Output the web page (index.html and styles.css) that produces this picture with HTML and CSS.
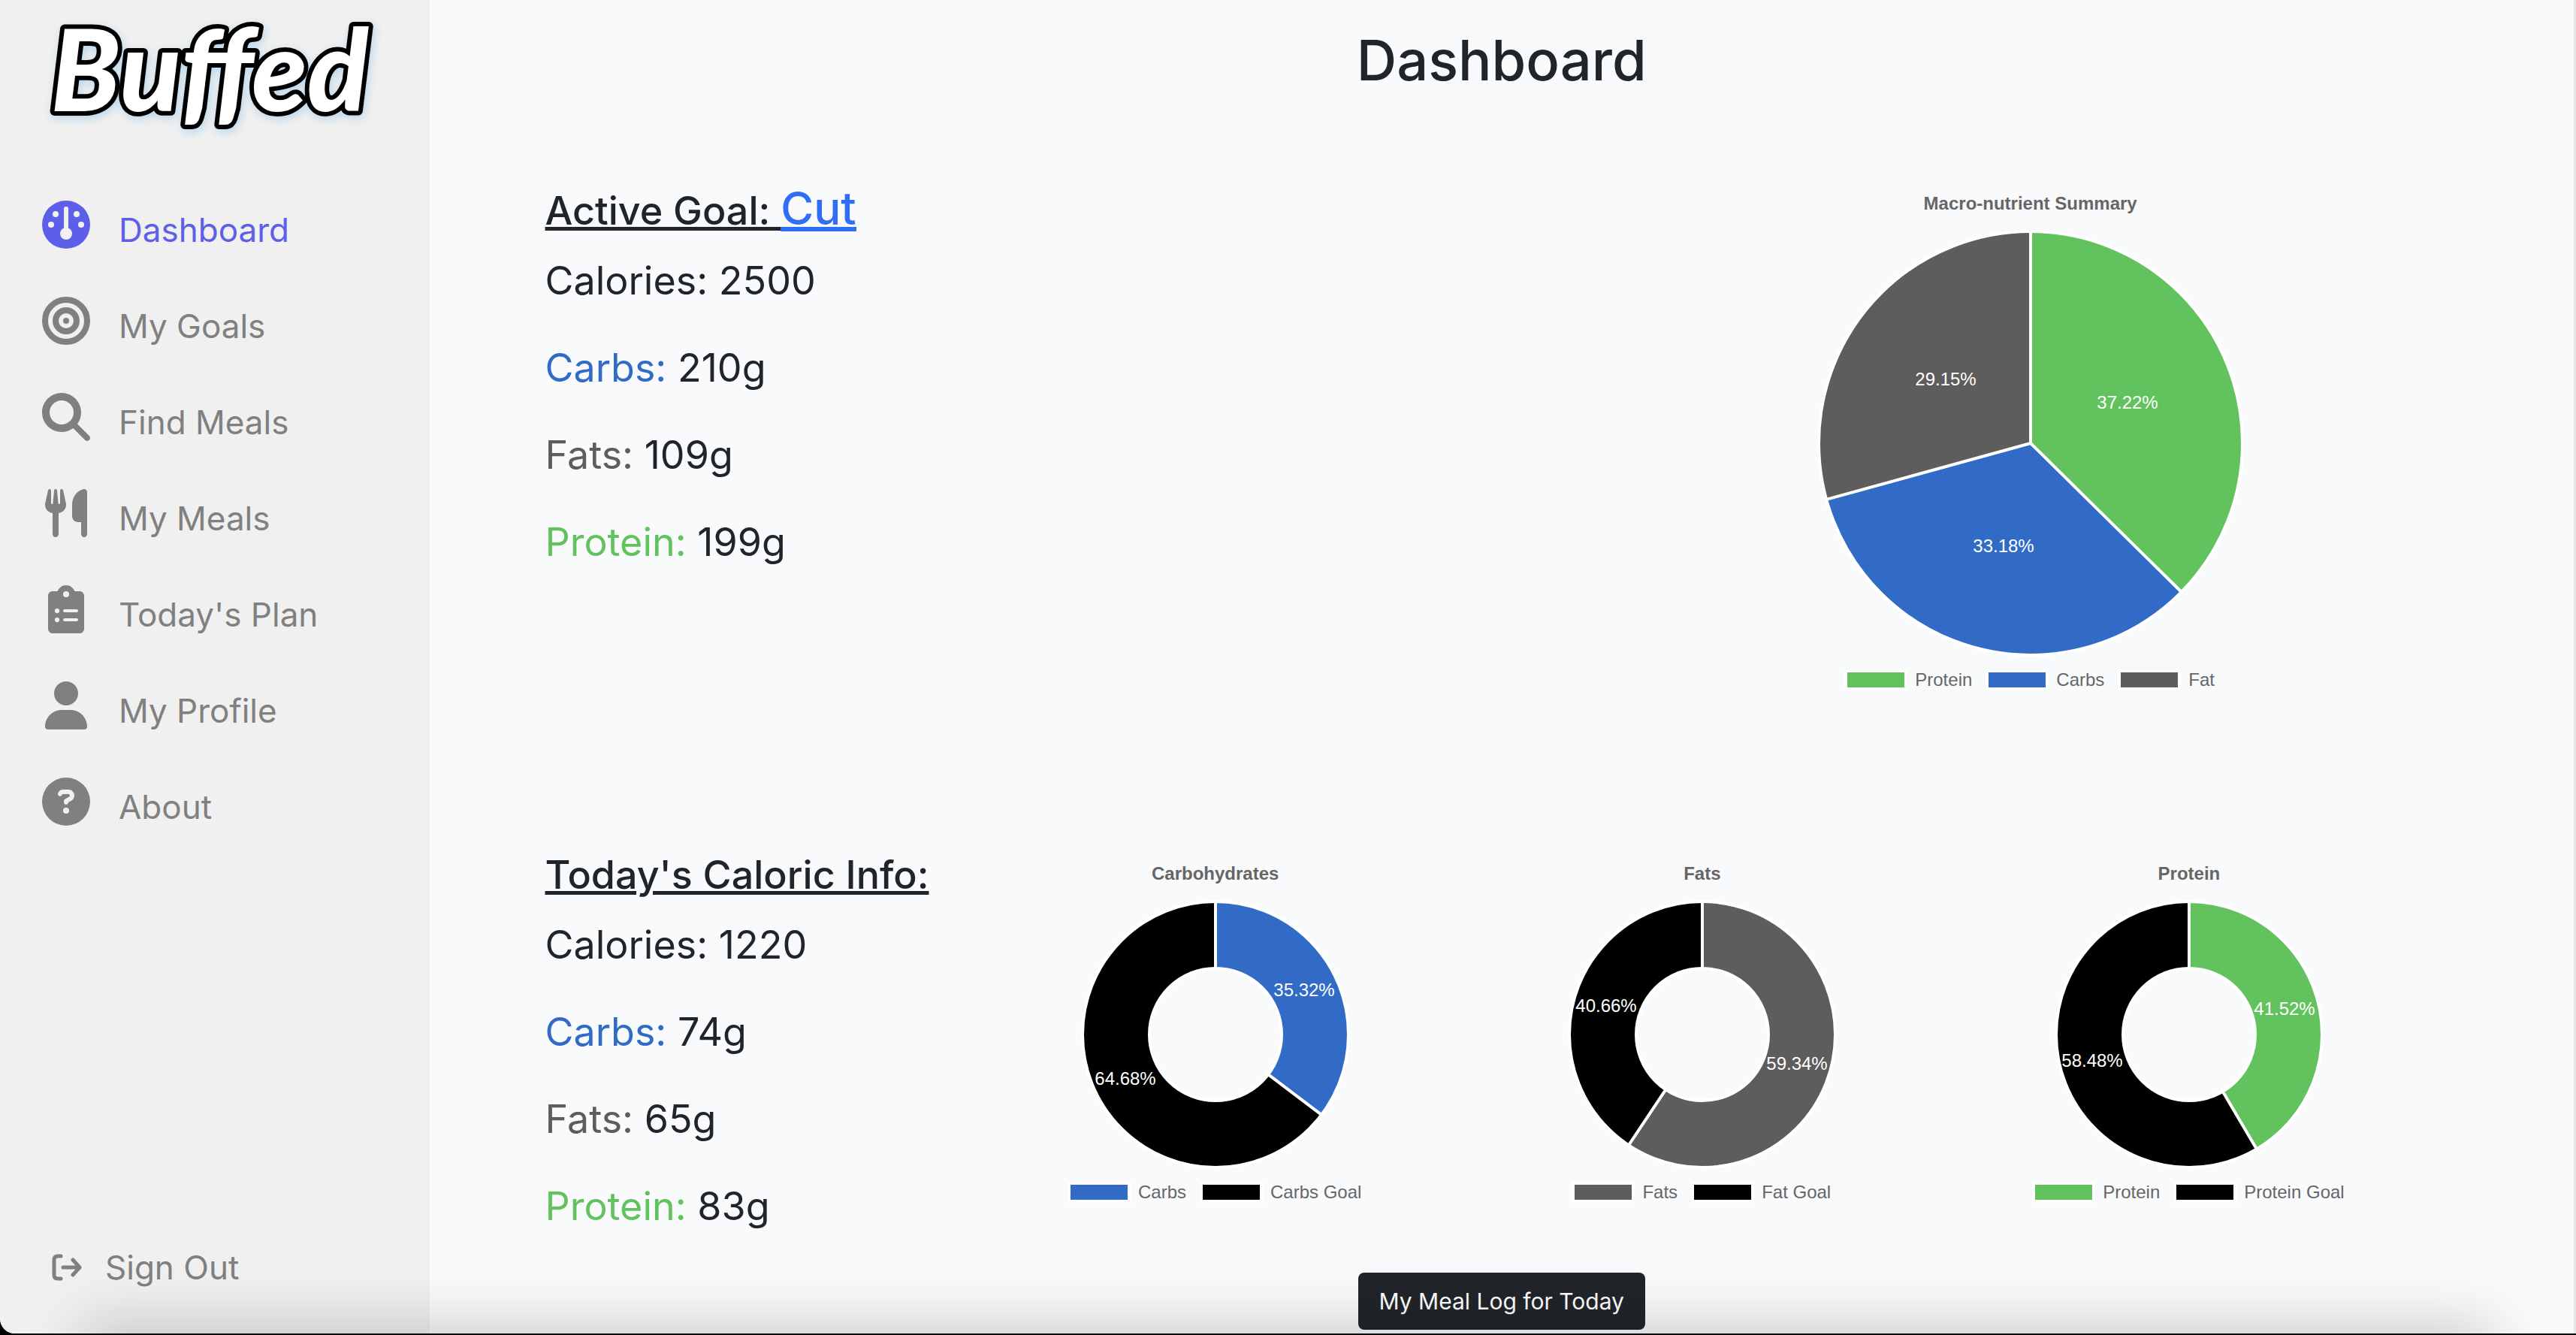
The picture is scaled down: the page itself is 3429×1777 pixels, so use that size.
FILE: index.html
```html
<!DOCTYPE html>
<html lang="en">
<head>
<meta charset="utf-8">
<title>Buffed - Dashboard</title>
<meta name="viewport" content="width=device-width, initial-scale=1">
<link rel="stylesheet" href="styles.css">
</head>
<body>
<div class="app">
  <aside class="sidebar">
    <a class="logo" href="#" aria-label="Buffed home">
      <svg class="logo-art" viewBox="0 0 460 210"><text class="logo-text" x="223" y="148" text-anchor="middle">Buffed</text></svg>
    </a>
    <nav class="nav">
      <a class="nav-link active" href="#">
        <svg class="nav-icon" viewBox="0 0 512 512"><circle cx="256" cy="256" r="256"/><g fill="#f0f0f0"><circle cx="144" cy="144" r="32"/><circle cx="368" cy="144" r="32"/><circle cx="96" cy="256" r="32"/><circle cx="416" cy="256" r="32"/><circle cx="256" cy="352" r="64"/><rect x="232" y="64" width="48" height="280" rx="24"/></g></svg>
        <span class="nav-label">Dashboard</span>
      </a>
      <a class="nav-link" href="#">
        <svg class="nav-icon" viewBox="0 0 512 512"><g fill="none" stroke="currentColor" stroke-width="64"><circle cx="256" cy="256" r="224"/><circle cx="256" cy="256" r="112"/></g><circle cx="256" cy="256" r="32"/></svg>
        <span class="nav-label">My Goals</span>
      </a>
      <a class="nav-link" href="#">
        <svg class="nav-icon" viewBox="0 0 512 512"><path d="M416 208c0 45.900-14.900 88.300-40 122.700L502.600 457.400c12.500 12.500 12.500 32.800 0 45.300s-32.800 12.500-45.300 0L330.700 376c-34.400 25.200-76.800 40-122.700 40C93.100 416 0 322.900 0 208S93.100 0 208 0S416 93.100 416 208zM208 336a128 128 0 1 0 0-256 128 128 0 1 0 0 256z"/></svg>
        <span class="nav-label">Find Meals</span>
      </a>
      <a class="nav-link" href="#">
        <svg class="nav-icon" viewBox="-32 0 512 512"><path d="M416 0C400 0 288 32 288 176V288c0 35.300 28.700 64 64 64h32V480c0 17.700 14.300 32 32 32s32-14.300 32-32V352 240 32c0-17.700-14.300-32-32-32zM64 16C64 7.800 57.900 1 49.700 .1S34.200 4.600 32.400 12.500L2.100 148.800C.7 155.100 0 161.500 0 167.900c0 45.900 35.100 83.600 80 87.700V480c0 17.700 14.300 32 32 32s32-14.300 32-32V255.600c44.900-4.100 80-41.800 80-87.700c0-6.400-.7-12.800-2.100-19.100L191.600 12.500c-1.800-8-9.300-13.300-17.400-12.400S160 7.800 160 16V150.200c0 5.400-4.400 9.800-9.800 9.800c-5.100 0-9.300-3.900-9.800-9L127.900 14.600C127.200 6.300 120.300 0 112 0s-15.200 6.300-15.900 14.600L83.700 151c-.5 5.100-4.700 9-9.800 9c-5.400 0-9.800-4.400-9.800-9.800V16z"/></svg>
        <span class="nav-label">My Meals</span>
      </a>
      <a class="nav-link" href="#">
        <svg class="nav-icon" viewBox="-64 0 512 512"><path d="M192 0c-41.800 0-77.400 26.700-90.500 64H48C21.500 64 0 85.500 0 112V464c0 26.500 21.500 48 48 48H336c26.500 0 48-21.500 48-48V112c0-26.500-21.500-48-48-48H282.500C269.400 26.700 233.800 0 192 0z"/><g fill="#f0f0f0"><circle cx="192" cy="96" r="32"/><circle cx="96" cy="272" r="25"/><circle cx="96" cy="368" r="25"/><rect x="160" y="256" width="160" height="32" rx="16"/><rect x="160" y="352" width="160" height="32" rx="16"/></g></svg>
        <span class="nav-label">Today's Plan</span>
      </a>
      <a class="nav-link" href="#">
        <svg class="nav-icon" viewBox="-32 0 512 512"><path d="M224 256A128 128 0 1 0 224 0a128 128 0 1 0 0 256zm-45.700 48C79.800 304 0 383.800 0 482.300C0 498.700 13.300 512 29.700 512H418.300c16.400 0 29.700-13.300 29.700-29.700C448 383.800 368.200 304 269.700 304H178.300z"/></svg>
        <span class="nav-label">My Profile</span>
      </a>
      <a class="nav-link" href="#">
        <svg class="nav-icon" viewBox="0 0 512 512"><path d="M256 512A256 256 0 1 0 256 0a256 256 0 1 0 0 512zM169.800 165.300c7.900-22.300 29.100-37.300 52.800-37.300h58.300c34.900 0 63.100 28.300 63.100 63.100c0 22.600-12.100 43.500-31.700 54.800L280 264.400c-.2 13-10.900 23.600-24 23.600c-13.300 0-24-10.700-24-24V250.500c0-8.600 4.600-16.500 12.100-20.800l44.300-25.400c4.700-2.700 7.600-7.700 7.600-13.100c0-8.400-6.800-15.100-15.100-15.100H222.600c-3.400 0-6.400 2.100-7.500 5.300l-.4 1.200c-4.400 12.500-18.200 19-30.600 14.600s-19-18.200-14.600-30.600l.3-1.300zM224 352a32 32 0 1 1 64 0 32 32 0 1 1 -64 0z"/></svg>
        <span class="nav-label">About</span>
      </a>
    </nav>
    <a class="sign-out" href="#">
      <svg class="sign-out-icon" viewBox="0 0 40 40" fill="none" stroke="currentColor" stroke-width="5" stroke-linecap="round" stroke-linejoin="round"><path d="M12 5H8Q3 5 3 10V30Q3 35 8 35H12"/><path d="M15 20H37M28 10L37 20L28 30"/></svg>
      <span>Sign Out</span>
    </a>
  </aside>

  <main class="main">
    <h1 class="page-title">Dashboard</h1>

    <section class="goal">
      <div class="facts">
        <h2 class="facts-title">Active Goal: <a class="goal-link" href="#">Cut</a></h2>
        <p>Calories: 2500</p>
        <p><span class="carbs">Carbs:</span> 210g</p>
        <p><span class="fats">Fats:</span> 109g</p>
        <p><span class="protein">Protein:</span> 199g</p>
      </div>
      <figure class="chart chart-pie">
        <figcaption class="chart-title">Macro-nutrient Summary</figcaption>
        <svg class="pie" viewBox="-285 -285 570 570">
          <g class="slices" stroke-width="282" transform="rotate(-90)">
            <circle class="s-protein" r="141" pathLength="100" stroke-dasharray="37.39 100"/>
            <circle class="s-carbs" r="141" pathLength="100" stroke-dasharray="33.33 100" stroke-dashoffset="-37.39"/>
            <circle class="s-fats" r="141" pathLength="100" stroke-dasharray="29.28 100" stroke-dashoffset="-70.72"/>
          </g>
          <g class="edges"><circle r="282"/><path d="M0 -282V0L200.800 198M0 0L-271.900 74.900"/></g>
          <g class="values"><text x="129" y="-46">37.22%</text><text x="-36" y="145">33.18%</text><text x="-113" y="-77">29.15%</text></g>
        </svg>
        <ul class="legend">
          <li><i class="swatch b-protein"></i>Protein</li>
          <li><i class="swatch b-carbs"></i>Carbs</li>
          <li><i class="swatch b-fats"></i>Fat</li>
        </ul>
      </figure>
    </section>

    <section class="today">
      <div class="facts">
        <h2 class="facts-title">Today's Caloric Info:</h2>
        <p>Calories: 1220</p>
        <p><span class="carbs">Carbs:</span> 74g</p>
        <p><span class="fats">Fats:</span> 65g</p>
        <p><span class="protein">Protein:</span> 83g</p>
      </div>
      <figure class="chart">
        <figcaption class="chart-title">Carbohydrates</figcaption>
        <svg class="donut" viewBox="-180 -180 360 360">
          <g class="slices" stroke-width="89" transform="rotate(-90)">
            <circle class="s-carbs" r="132.500" pathLength="100" stroke-dasharray="35.32 100"/>
            <circle class="s-goal" r="132.500" pathLength="100" stroke-dasharray="64.68 100" stroke-dashoffset="-35.32"/>
          </g>
          <g class="edges"><circle r="177"/><circle r="88"/><path d="M0 -177V-88M70.100 53.200L141.100 106.900"/></g>
          <g class="values"><text x="118" y="-51">35.32%</text><text x="-120" y="67">64.68%</text></g>
        </svg>
        <ul class="legend">
          <li><i class="swatch b-carbs"></i>Carbs</li>
          <li><i class="swatch b-goal"></i>Carbs Goal</li>
        </ul>
      </figure>
      <figure class="chart">
        <figcaption class="chart-title">Fats</figcaption>
        <svg class="donut" viewBox="-180 -180 360 360">
          <g class="slices" stroke-width="89" transform="rotate(-90)">
            <circle class="s-fats" r="132.500" pathLength="100" stroke-dasharray="59.34 100"/>
            <circle class="s-goal" r="132.500" pathLength="100" stroke-dasharray="40.66 100" stroke-dashoffset="-59.34"/>
          </g>
          <g class="edges"><circle r="177"/><circle r="88"/><path d="M0 -177V-88M-48.700 73.300L-98 147.400"/></g>
          <g class="values"><text x="126" y="47">59.34%</text><text x="-128" y="-30">40.66%</text></g>
        </svg>
        <ul class="legend">
          <li><i class="swatch b-fats"></i>Fats</li>
          <li><i class="swatch b-goal"></i>Fat Goal</li>
        </ul>
      </figure>
      <figure class="chart">
        <figcaption class="chart-title">Protein</figcaption>
        <svg class="donut" viewBox="-180 -180 360 360">
          <g class="slices" stroke-width="89" transform="rotate(-90)">
            <circle class="s-protein" r="132.500" pathLength="100" stroke-dasharray="41.52 100"/>
            <circle class="s-goal" r="132.500" pathLength="100" stroke-dasharray="58.48 100" stroke-dashoffset="-41.52"/>
          </g>
          <g class="edges"><circle r="177"/><circle r="88"/><path d="M0 -177V-88M44.700 75.800L89.900 152.500"/></g>
          <g class="values"><text x="127" y="-26">41.52%</text><text x="-129" y="43">58.48%</text></g>
        </svg>
        <ul class="legend">
          <li><i class="swatch b-protein"></i>Protein</li>
          <li><i class="swatch b-goal"></i>Protein Goal</li>
        </ul>
      </figure>
    </section>

    <button class="log-button" type="button">My Meal Log for Today</button>
  </main>
</div>
</body>
</html>
```
FILE: styles.css
```css
:root {
  --carbs: #326bc6;
  --fats: #5e5c5d;
  --protein: #62c25e;
  --ink: #212529;
  --muted: #808080;
  --sidebar: #f0f0f0;
}

* { box-sizing: border-box; }

html { background: #000; }

body {
  margin: 0;
  color: var(--ink);
  font-family: Inter, "Liberation Sans", sans-serif;
}

h1, h2, p, ul, figure { margin: 0; padding: 0; }

/* App window, with the soft shadow that rises from its lower edge */
.app {
  position: relative;
  display: grid;
  grid-template-columns: 1fr 5fr;
  min-height: calc(100vh - 2px);
  overflow: hidden;
  border-bottom-left-radius: 20px;
  background: #f9fafc;
}

.app::after {
  content: "";
  position: absolute;
  right: 120px;
  bottom: -60px;
  left: 120px;
  height: 60px;
  box-shadow: 0 0 80px 10px rgba(0, 0, 0, 0.2);
  pointer-events: none;
}

/* Sidebar */
.sidebar {
  display: flex;
  flex-direction: column;
  padding: 0 0 52px 56px;
  background: var(--sidebar);
}

.logo { display: block; height: 235px; }

.logo-art { display: block; width: 460px; height: 210px; }

.logo-text {
  font: italic 900 150px Lato, "Liberation Sans", sans-serif;
  fill: #fff;
  stroke: #000;
  stroke-width: 12px;
  stroke-linejoin: round;
  paint-order: stroke;
  filter: drop-shadow(2px 4px 6px rgba(130, 190, 230, 0.5));
}

.nav { display: flex; flex-direction: column; }

.nav-link {
  display: flex;
  align-items: center;
  gap: 38px;
  height: 128px;
  color: var(--muted);
  font-size: 44px;
  text-decoration: none;
}

.nav-link.active { color: #5d5fe8; }

.nav-icon { flex: none; width: 64px; height: 64px; fill: currentColor; }

.nav-label { padding-top: 14px; }

.sign-out {
  display: flex;
  align-items: center;
  gap: 31px;
  margin-top: auto;
  padding-left: 13px;
  color: var(--muted);
  font-size: 44px;
  line-height: 72px;
  text-decoration: none;
}

.sign-out-icon { width: 40px; height: 40px; }

/* Main column */
.main {
  display: flex;
  flex-direction: column;
  align-items: center;
  padding: 32px 0 5px;
  border-right: 3px solid #e5e6e7;
}

.page-title {
  font-size: 74px;
  font-weight: 500;
  line-height: 96px;
}

.goal,
.today {
  display: grid;
  align-self: stretch;
  padding: 0 188px 0 74px;
}

.goal { grid-template-columns: 587fr 413fr; margin-top: 112px; }

.today { grid-template-columns: repeat(4, 1fr); margin-top: 205px; }

.facts {
  padding: 2px 0 0 80px;
  font-size: 52px;
  line-height: 84px;
  white-space: nowrap;
}

.facts p + p { margin-top: 32px; }

.facts-title {
  margin-bottom: 12px;
  font-size: 52px;
  font-weight: 500;
  line-height: 78px;
  text-decoration: underline;
}

.goal-link { color: #316ef6; font-size: 60px; line-height: 60px; }

.carbs { color: var(--carbs); }
.fats { color: var(--fats); }
.protein { color: var(--protein); }

/* Charts */
.chart {
  display: flex;
  flex-direction: column;
  align-items: center;
  margin-top: 25px;
  color: #666;
  font: 24px/28px "Liberation Sans", Arial, sans-serif;
}

.chart-pie { margin-top: 17px; }

.chart-title { font-weight: 700; }

.pie, .donut { margin: 20px 0 16px; }
.pie { width: 570px; height: 570px; }
.donut { width: 360px; height: 360px; }

.slices { fill: none; }
.s-carbs { stroke: var(--carbs); }
.s-fats { stroke: var(--fats); }
.s-protein { stroke: var(--protein); }
.s-goal { stroke: #000; }

.edges { fill: none; stroke: #fff; stroke-width: 4px; }

.values { fill: #fff; text-anchor: middle; }

.legend { display: flex; gap: 20px; list-style: none; white-space: nowrap; }

.legend li { display: flex; align-items: center; gap: 10px; }

.swatch { width: 84px; height: 28px; margin-left: -2px; border: 4px solid #fff; }

.b-carbs { background: var(--carbs); }
.b-fats { background: var(--fats); }
.b-protein { background: var(--protein); }
.b-goal { background: #000; }

.log-button {
  margin-top: 46px;
  padding: 14px 28px;
  border: 0;
  border-radius: 8px;
  background: var(--ink);
  color: #fff;
  font: 30px/48px Inter, "Liberation Sans", sans-serif;
}
```
